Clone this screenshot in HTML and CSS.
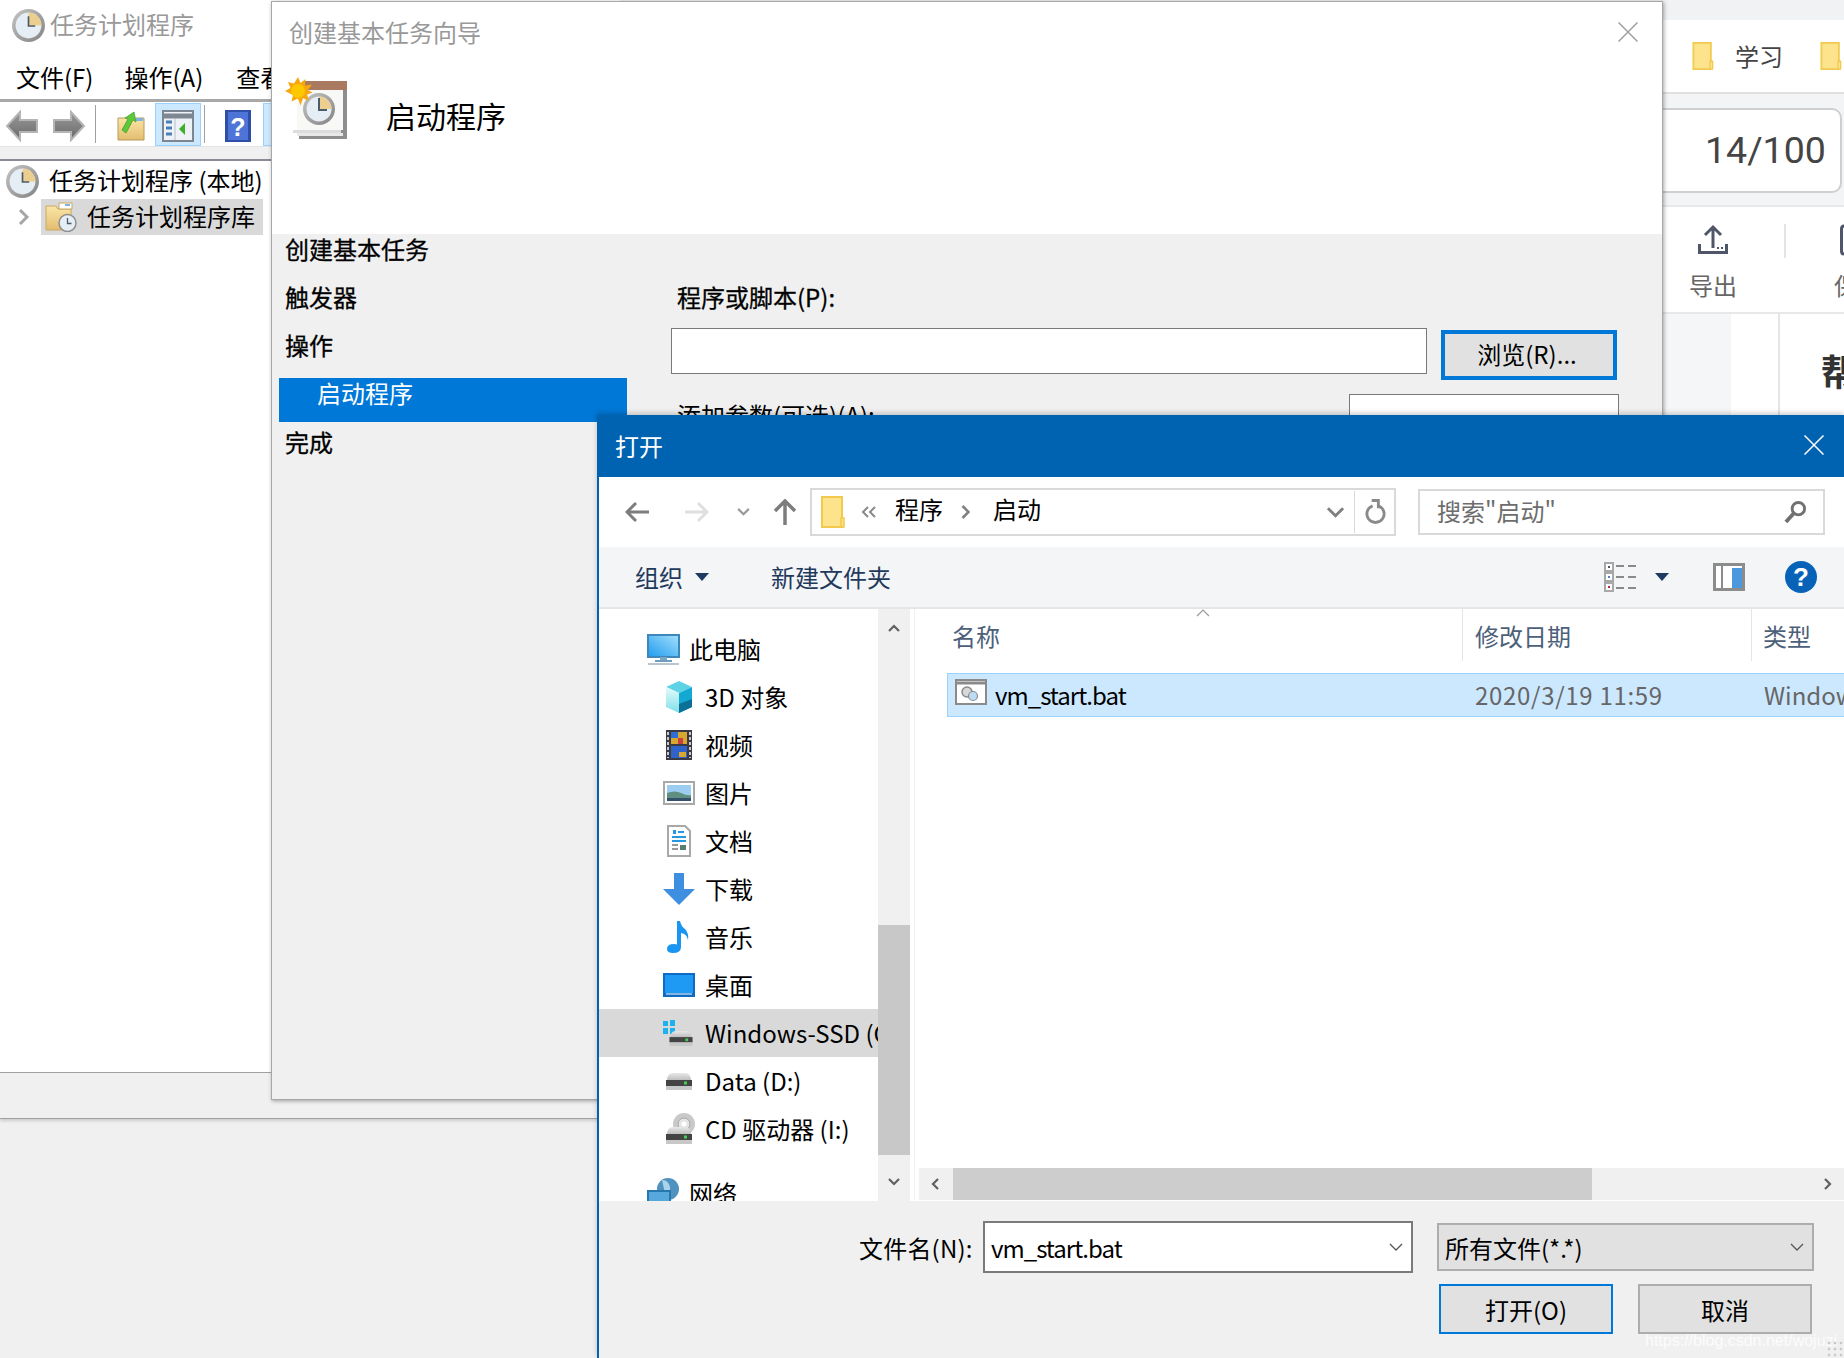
FILE: index.html
```html
<!DOCTYPE html>
<html lang="zh-CN">
<head>
<meta charset="utf-8">
<title>任务计划程序</title>
<link rel="stylesheet" href="styles.css">
</head>
<body>
<svg class="defs" aria-hidden="true">
  <defs>
    <linearGradient id="gArrow" x1="0" y1="0" x2="0" y2="1"><stop offset="0" stop-color="#9a9a9a"/><stop offset="1" stop-color="#6a6a6a"/></linearGradient>
    <linearGradient id="gFolder" x1="0" y1="0" x2="0" y2="1"><stop offset="0" stop-color="#fbe6a6"/><stop offset="1" stop-color="#e3bd70"/></linearGradient>
    <linearGradient id="gDisk" x1="0" y1="0" x2="0" y2="1"><stop offset="0" stop-color="#e8e8e8"/><stop offset="1" stop-color="#b8b8b8"/></linearGradient>
    <linearGradient id="gScreen" x1="0" y1="1" x2="1" y2="0"><stop offset="0" stop-color="#1f9bf0"/><stop offset="1" stop-color="#a5e1fb"/></linearGradient>
    <linearGradient id="gRing" x1="0" y1="0" x2="1" y2="1"><stop offset="0" stop-color="#c4c4c4"/><stop offset="1" stop-color="#838383"/></linearGradient>
    <linearGradient id="gCube" x1="0" y1="0" x2="0" y2="1"><stop offset="0" stop-color="#e4fafb"/><stop offset="1" stop-color="#7fe0ea"/></linearGradient>
  </defs>
  <symbol id="clock" viewBox="0 0 32 32">
    <circle cx="16" cy="16" r="16" fill="url(#gRing)"/>
    <circle cx="16" cy="16" r="12.500" fill="#e6eef5"/>
    <path d="M16 3.500A12.500 12.500 0 0 1 28.500 16H16z" fill="#eccf8e"/>
    <path d="M16 7v9.500h6.500" fill="none" stroke="#4d5a68" stroke-width="1.600"/>
  </symbol>
  <symbol id="arrowL" viewBox="0 0 34 32">
    <path d="M15 2 2 16l13 14V22h17V10H15z" fill="url(#gArrow)" stroke="#b5b5b5" stroke-width="2"/>
  </symbol>
  <symbol id="arrowR" viewBox="0 0 34 32">
    <path d="M19 2 32 16 19 30V22H2V10h17z" fill="url(#gArrow)" stroke="#b5b5b5" stroke-width="2"/>
  </symbol>
  <symbol id="folderY" viewBox="0 0 24 32">
    <path d="M1 1h20v30H1z" fill="#fde38c" stroke="#f2c94c" stroke-width="2"/>
    <path d="M20 22h3v9h-3z" fill="#fde38c" stroke="#f2c94c" stroke-width="1.500"/>
  </symbol>
  <symbol id="disk" viewBox="0 0 28 18">
    <path d="M2 9q0-8 6-8h12q6 0 6 8z" fill="url(#gDisk)"/>
    <rect x="1" y="8" width="26" height="6" fill="#444"/>
    <rect x="1" y="14" width="26" height="4" fill="#c8c8c8"/>
    <rect x="19" y="9.500" width="3" height="3" fill="#45d052"/>
  </symbol>
</svg>

<section class="browser">
  <div class="b-strip"></div>
  <div class="b-tabs">
    <svg class="ic-folder-b"><use href="#folderY"/></svg>
    <span class="b-tab">学习</span>
    <svg class="ic-folder-b b-folder2"><use href="#folderY"/></svg>
  </div>
  <div class="b-counter-wrap"><div class="b-counter">14/100</div></div>
  <div class="b-actions">
    <div class="b-action">
      <svg class="ic-export" viewBox="0 0 30 32"><path d="M15 24V4M7 11l8-8 8 8" fill="none" stroke="#50566a" stroke-width="3"/><path d="M1.500 20v8.500h27V20" fill="none" stroke="#50566a" stroke-width="3"/><path d="M19 23h2v2h-2zM23 23h2v2h-2z" fill="#50566a"/></svg>
      <span>导出</span>
    </div>
    <div class="b-sep"></div>
    <div class="b-action b-action2">
      <svg class="ic-save" viewBox="0 0 10 32"><path d="M8 2H4Q1.500 2 1.500 5v22q0 3 2.500 3h4" fill="none" stroke="#50566a" stroke-width="3"/></svg>
      <span>保存</span>
    </div>
  </div>
  <div class="b-lower">
    <div class="b-gutter"></div>
    <div class="b-blank"></div>
    <div class="b-doc">帮助</div>
  </div>
</section>

<section class="sched">
  <header class="sched-title">
    <svg class="ic-sched-clock"><use href="#clock"/></svg>
    <span>任务计划程序</span>
  </header>
  <nav class="sched-menu"><span>文件(F)</span><span>操作(A)</span><span>查看(V)</span></nav>
  <div class="sched-tools">
    <svg class="t-back"><use href="#arrowL"/></svg>
    <svg class="t-fwd"><use href="#arrowR"/></svg>
    <i class="t-sep t-sep1"></i>
    <svg class="t-up" viewBox="0 0 28 30"><path d="M1 7h26v22H1z" fill="url(#gFolder)" stroke="#b89a5a"/><path d="M19 7h7v3h-7z" fill="#7fb2e0"/><path d="M5 19 11 8 8 7l9-6 2 10-3-2-7 13z" fill="#5cc83a" stroke="#3f9a25" stroke-width=".7"/></svg>
    <span class="t-btn"><svg viewBox="0 0 32 32"><rect x="1" y="1" width="30" height="30" fill="#eef2f6" stroke="#7d8791" stroke-width="2"/><path d="M1 6h30" stroke="#7d8791" stroke-width="5"/><path d="M13 9v21" stroke="#b8bec4"/><path d="M4 12h6M4 18h6M4 24h6" stroke="#4a7fb5" stroke-width="3"/><path d="M23 13v12l-6-6z" fill="#3fae2a"/></svg></span>
    <i class="t-sep t-sep2"></i>
    <svg class="t-help" viewBox="0 0 26 32"><rect width="26" height="32" fill="#2f4ea8"/><rect x="3" y="2" width="20" height="28" fill="#4d74d6"/><text x="13" y="26" class="t-help-q">?</text></svg>
    <span class="t-btn t-btn2"></span>
  </div>
  <div class="sched-strip"></div>
  <div class="sched-tree">
    <div class="tree1">
      <svg class="ic-tree-clock"><use href="#clock"/></svg>
      <span>任务计划程序 (本地)</span>
    </div>
    <div class="tree2">
      <svg class="tree-chev" viewBox="0 0 12 16"><path d="M2 1l7 7-7 7" fill="none" stroke="#a6a6a6" stroke-width="3"/></svg>
      <div class="tree2-sel">
        <svg class="ic-tree-folder" viewBox="0 0 32 30"><path d="M1 4h10l2 3h13v21H1z" fill="url(#gFolder)" stroke="#c9a860"/><path d="M14 1h13v6H14z" fill="#fff" stroke="#c9a860"/><path d="M20 2h5v2h-5z" fill="#7fb2e0"/><circle cx="22.500" cy="21" r="8.500" fill="#e6eef5" stroke="#8d8d8d" stroke-width="1.500"/><path d="M22.500 16v5.500h4" fill="none" stroke="#4d5a68" stroke-width="1.300"/></svg>
        <span>任务计划程序库</span>
      </div>
    </div>
  </div>
  <div class="sched-status"></div>
</section>

<section class="wizard">
  <div class="wiz-top">
    <header class="wiz-title">
      <span>创建基本任务向导</span>
      <svg class="wiz-close" viewBox="0 0 20 20"><path d="M.5.500l19 19M19.500.500l-19 19" stroke="#a0a0a0" stroke-width="1.500"/></svg>
    </header>
    <div class="wiz-heading">
      <svg class="ic-wiz" viewBox="0 0 62 62">
        <rect x="14" y="8" width="48" height="54" fill="#8e8e8e"/>
        <rect x="12" y="56" width="46" height="3" fill="#e8e8e8"/>
        <path d="M8 53h48v3H8z" fill="#dcdcdc"/>
        <rect x="12" y="13" width="46" height="40" fill="#f8f8f6"/>
        <rect x="20" y="4" width="42" height="9" fill="#a97a60"/>
        <circle cx="34" cy="32" r="16" fill="url(#gRing)"/><circle cx="34" cy="32" r="12.500" fill="#e6eef5"/>
        <path d="M34 19.500A12.500 12.500 0 0 1 46.500 32H34z" fill="#eccf8e"/>
        <path d="M34 21v12h8" fill="none" stroke="#4d5a68" stroke-width="2"/>
        <path d="M13 0l2.500 6 5-4-.5 6.500 7-1-4 5.500 4.500 2.500-5.500 2 2 6.500-6-3-2.500 7.500-2.500-7-6.500 3 1.500-6.500L0 14l5.500-3L3 5l6 1.500z" fill="#f7a70c"/>
        <circle cx="13" cy="14" r="7" fill="#fdc800"/>
      </svg>
      <span class="wiz-h1">启动程序</span>
    </div>
  </div>
  <div class="wiz-body">
    <ul class="steps">
      <li>创建基本任务</li>
      <li>触发器</li>
      <li>操作</li>
      <li class="step-on">启动程序</li>
      <li>完成</li>
    </ul>
    <div class="wiz-main">
      <div class="f-label">程序或脚本(P):</div>
      <div class="f-row">
        <div class="f-input"></div>
        <div class="f-browse">浏览(R)...</div>
      </div>
      <div class="f-row2">
        <div class="f-label2">添加参数(可选)(A):</div>
        <div class="f-input2"></div>
      </div>
    </div>
  </div>
</section>

<section class="dialog">
  <header class="d-title">
    <span>打开</span>
    <svg class="d-close" viewBox="0 0 20 20"><path d="M.5.500l19 19M19.500.500l-19 19" stroke="#fff" stroke-width="1.500"/></svg>
  </header>
  <div class="d-nav">
    <svg class="n-back" viewBox="0 0 24 22"><path d="M11 2 2 11l9 9M2 11h22" fill="none" stroke="#7d7d7d" stroke-width="3"/></svg>
    <svg class="n-fwd" viewBox="0 0 24 22"><path d="M13 2l9 9-9 9M22 11H0" fill="none" stroke="#dfdfdf" stroke-width="3"/></svg>
    <svg class="n-drop" viewBox="0 0 14 9"><path d="M1 1l6 6 6-6" fill="none" stroke="#9a9a9a" stroke-width="2.500"/></svg>
    <svg class="n-up" viewBox="0 0 24 26"><path d="M2 12l10-10 10 10M12 2v24" fill="none" stroke="#7d7d7d" stroke-width="3.500"/></svg>
    <div class="addr">
      <svg class="addr-folder"><use href="#folderY"/></svg>
      <svg class="addr-more" viewBox="0 0 16 12"><path d="M7 1 2 6l5 5M14 1 9 6l5 5" fill="none" stroke="#8a8a8a" stroke-width="2"/></svg>
      <span class="addr-a">程序</span>
      <svg class="addr-sep" viewBox="0 0 9 14"><path d="M1.500 1l6 6-6 6" fill="none" stroke="#808080" stroke-width="2.500"/></svg>
      <span class="addr-b">启动</span>
      <svg class="addr-chev" viewBox="0 0 20 12"><path d="M2 2l8 8 8-8" fill="none" stroke="#808080" stroke-width="3"/></svg>
      <i class="addr-div"></i>
      <svg class="addr-ref" viewBox="0 0 22 26"><path d="M8 6.500a9 9 0 1 0 6 0" fill="none" stroke="#8a8a8a" stroke-width="3"/><path d="M7 1h7v8" fill="none" stroke="#8a8a8a" stroke-width="3"/></svg>
    </div>
    <div class="search">
      <span>搜索"启动"</span>
      <svg class="search-ic" viewBox="0 0 24 26"><circle cx="15" cy="9" r="6.500" fill="none" stroke="#707070" stroke-width="3"/><path d="M10 14 2 23" stroke="#707070" stroke-width="4"/></svg>
    </div>
  </div>
  <div class="d-tools">
    <span class="dt-org">组织</span>
    <svg class="dt-tri" viewBox="0 0 14 8"><path d="M0 0h14L7 8z" fill="#1f3a60"/></svg>
    <span class="dt-new">新建文件夹</span>
    <svg class="dt-view" viewBox="0 0 32 30"><path d="M1 1h8v8H1zM1 11h8v8H1zM1 21h8v8H1z" fill="#fff" stroke="#a8a8a8" stroke-width="2"/><path d="M4 4h2v2H4z" fill="#555"/><path d="M4 14h2v2H4z" fill="#4a7fd6"/><path d="M4 24h2v2H4z" fill="#c02a2a"/><path d="M12 4h8M24 4h8M12 15h8M24 15h8M12 26h8M24 26h8" stroke="#8a8a8a" stroke-width="2"/></svg>
    <svg class="dt-tri dt-tri2" viewBox="0 0 14 8"><path d="M0 0h14L7 8z" fill="#1f3a60"/></svg>
    <svg class="dt-pane" viewBox="0 0 32 28"><rect x="1.500" y="1.500" width="29" height="25" fill="#fff" stroke="#8c8c8c" stroke-width="3"/><path d="M9 2v25" stroke="#8c8c8c" stroke-width="2"/><rect x="19" y="5" width="10" height="20" fill="#4c98df"/></svg>
    <svg class="dt-help" viewBox="0 0 32 32"><circle cx="16" cy="16" r="16" fill="#0863b8"/><text x="16" y="25" class="dt-help-q">?</text></svg>
  </div>
  <div class="d-main">
    <div class="tree">
      <div class="row row1"><svg class="ic" viewBox="0 0 33 32"><rect x="1" y="2" width="31" height="22" fill="url(#gScreen)" stroke="#3f87ba" stroke-width="2"/><path d="M13 24h7v3h-7z" fill="#7aa6c6"/><path d="M8 27h17v2H8z" fill="#6e9dbf"/><path d="M1 30h31v2H1z" fill="#b9c6d0"/></svg><span>此电脑</span></div>
      <div class="row"><svg class="ic" viewBox="0 0 32 32"><path d="M16 0 29 6 16 12 3 6z" fill="#5fd3e6"/><path d="M3 6l13 6v20L3 26z" fill="url(#gCube)"/><path d="M29 6 16 12v20l13-6z" fill="#12a9d3"/><path d="M16 23l13-5v8l-13 6z" fill="#0c6f96"/></svg><span>3D 对象</span></div>
      <div class="row"><svg class="ic" viewBox="0 0 32 32"><rect x="3" y="1" width="26" height="30" fill="#3a3a44"/><path d="M5 3v26M27 3v26" stroke="#c9c9c9" stroke-width="2" stroke-dasharray="3 2"/><rect x="8" y="3" width="16" height="12" fill="#d8a72d"/><rect x="8" y="3" width="7" height="6" fill="#2d6fd6"/><rect x="15" y="9" width="5" height="6" fill="#c9413f"/><rect x="8" y="17" width="16" height="12" fill="#2f63c9"/><rect x="16" y="23" width="7" height="5" fill="#d8a72d"/></svg><span>视频</span></div>
      <div class="row"><svg class="ic" viewBox="0 0 32 24"><rect x="1" y="1" width="30" height="22" fill="#fff" stroke="#a8a8a8" stroke-width="2"/><rect x="4" y="4" width="24" height="16" fill="#9ccdf0"/><path d="M4 12q8-3 14 0t10 2v6H4z" fill="#5f8f80"/><path d="M4 17h24v3H4z" fill="#34506a"/></svg><span>图片</span></div>
      <div class="row"><svg class="ic" viewBox="0 0 32 32"><path d="M5 1h17l5 5v25H5z" fill="#fff" stroke="#a8a8a8" stroke-width="2"/><path d="M10 5h3v4h-3z" fill="#2a98e0"/><path d="M15 7h6M9 12h14M9 16h14" stroke="#2a98e0" stroke-width="2"/><path d="M9 20h6M9 24h6" stroke="#9a9a9a" stroke-width="2"/><path d="M17 20h6v5h-6z" fill="#5a7f6f"/></svg><span>文档</span></div>
      <div class="row"><svg class="ic" viewBox="0 0 32 32"><path d="M11 0h10v16h11L16 32 0 16h11z" fill="#3f8fe0"/></svg><span>下载</span></div>
      <div class="row"><svg class="ic" viewBox="0 0 32 32"><path d="M14 0h3q1 5 5 8 4 4 3 11-1-6-7-7v14q0 6-8 6-6 0-6-4 0-5 7-5 2 0 3 .5z" fill="#1a96f2"/></svg><span>音乐</span></div>
      <div class="row"><svg class="ic" viewBox="0 0 32 24"><rect width="32" height="24" fill="#0e6bc4"/><rect x="2" y="2" width="28" height="18" fill="#1e9af5"/><path d="M3 21h26" stroke="#fff" stroke-width="1"/></svg><span>桌面</span></div>
      <div class="row row-sel"><svg class="ic" viewBox="0 0 32 26"><path d="M0 1h5v5H0zM7 0h5v6H7zM0 8h5v6H0zM7 8h5v6H7z" fill="#1cb2ee"/><use href="#disk" x="4" y="10" width="28" height="16"/></svg><span>Windows-SSD (C:)</span></div>
      <div class="row"><svg class="ic" viewBox="0 0 32 20"><use href="#disk" x="2" y="1" width="28" height="18"/></svg><span>Data (D:)</span></div>
      <div class="row"><svg class="ic" viewBox="0 0 32 32"><circle cx="21" cy="11" r="11" fill="#c9c9c9"/><circle cx="21" cy="11" r="6" fill="#e4e4e4" stroke="#a8a8a8"/><circle cx="21" cy="11" r="2.500" fill="#fff"/><use href="#disk" x="2" y="13" width="28" height="18"/></svg><span>CD 驱动器 (I:)</span></div>
      <div class="row row1 row-net"><svg class="ic" viewBox="0 0 33 32"><circle cx="21" cy="12" r="11" fill="#4f92bf"/><path d="M15 3q7 0 8 8t-4 10" fill="#a9d4ec"/><rect x="1" y="14" width="22" height="17" fill="#57a8dc" stroke="#2878b0" stroke-width="2"/></svg><span>网络</span></div>
    </div>
    <div class="vscroll">
      <svg class="vs-arrow" viewBox="0 0 12 8"><path d="M1 7l5-5 5 5" fill="none" stroke="#606060" stroke-width="2.200"/></svg>
      <div class="vs-track"><div class="vs-thumb"></div></div>
      <svg class="vs-arrow" viewBox="0 0 12 8"><path d="M1 1l5 5 5-5" fill="none" stroke="#606060" stroke-width="2.200"/></svg>
    </div>
    <div class="list">
      <div class="l-head">
        <div class="lh lh-name">名称<svg class="sort" viewBox="0 0 14 8"><path d="M1 7l6-6 6 6" fill="none" stroke="#9a9a9a" stroke-width="1.200"/></svg></div>
        <div class="lh lh-date">修改日期</div>
        <div class="lh lh-type">类型</div>
      </div>
      <div class="l-row">
        <div class="lc-name">
          <svg class="ic-bat" viewBox="0 0 32 26"><rect x="1" y="1" width="30" height="24" fill="#fff" stroke="#8a8a8a" stroke-width="2"/><path d="M1 4h30" stroke="#8a8a8a" stroke-width="3"/><circle cx="12" cy="13" r="5" fill="#d8d8d8" stroke="#8a8a8a" stroke-width="1.500"/><circle cx="18" cy="17" r="4.500" fill="#bcdcf5" stroke="#8a8a8a" stroke-width="1.200"/></svg>
          <span class="fname">vm_start.bat</span>
        </div>
        <div class="lc-date">2020/3/19 11:59</div>
        <div class="lc-type">Windows 批处理文件</div>
      </div>
      <div class="l-fill"></div>
      <div class="hscroll">
        <svg class="hs-arrow" viewBox="0 0 8 12"><path d="M7 1 2 6l5 5" fill="none" stroke="#606060" stroke-width="2.200"/></svg>
        <div class="hs-track"><div class="hs-thumb"></div></div>
        <svg class="hs-arrow" viewBox="0 0 8 12"><path d="M1 1l5 5-5 5" fill="none" stroke="#606060" stroke-width="2.200"/></svg>
      </div>
    </div>
  </div>
  <footer class="d-foot">
    <div class="foot-row">
      <span class="foot-label">文件名(N):</span>
      <div class="foot-input"><span class="fname">vm_start.bat</span><svg class="foot-chev" viewBox="0 0 14 8"><path d="M1 1l6 6 6-6" fill="none" stroke="#555" stroke-width="1.300"/></svg></div>
      <div class="foot-combo"><span>所有文件(*.*)</span><svg class="foot-chev" viewBox="0 0 14 8"><path d="M1 1l6 6 6-6" fill="none" stroke="#555" stroke-width="1.300"/></svg></div>
    </div>
    <div class="foot-btns">
      <div class="btn btn-def">打开(O)</div>
      <div class="btn">取消</div>
    </div>
  </footer>
</section>

<div class="mark">https://blog.csdn.net/wojuzi</div>
<div class="grip"></div>
</body>
</html>
```

FILE: styles.css
```css
* { box-sizing: border-box; }
html, body { margin: 0; padding: 0; }
body {
  position: relative;
  width: 1844px;
  height: 1358px;
  overflow: hidden;
  background: #f0f0f0;
  font-family: "Noto Sans CJK SC", "Noto Sans", sans-serif;
  font-size: 24px;
  color: #000;
}
svg { display: block; flex: none; }
.defs { position: absolute; width: 0; height: 0; }

/* background browser */
.browser { position: absolute; left: 1662px; top: 0; width: 182px; height: 420px; background: #fff; overflow: hidden; }
.b-strip { height: 20px; background: #f1f2f4; }
.b-tabs { height: 74px; display: flex; align-items: center; padding: 0 0 0 29px; border-bottom: 2px solid #e0e0e0; }
.ic-folder-b { width: 24px; height: 28px; }
.b-tab { width: 46px; flex: none; margin: 0 0 2px 20px; color: #444; white-space: nowrap; }
.b-folder2 { margin-left: 38px; }
.b-counter-wrap { height: 113px; padding: 14px 0; background: #f3f4f5; border-bottom: 2px solid #e8e8e8; }
.b-counter {
  width: 180px; height: 85px;
  background: #fff; border: 2px solid #cfcfcf; border-left: 0; border-radius: 0 10px 10px 0;
  padding-left: 43px; line-height: 80px;
  font-family: Roboto, sans-serif; font-size: 37.5px; color: #444;
}
.b-actions { height: 107px; display: flex; border-bottom: 2px solid #e8e8e8; }
.b-action { width: 122px; padding-left: 27px; color: #666; line-height: 30px; white-space: nowrap; flex: none; }
.ic-export { width: 30px; height: 32px; margin: 17px 0 14px 9px; }
.b-sep { width: 2px; height: 34px; margin-top: 17px; background: #e4e4e4; flex: none; }
.b-action2 { padding-left: 48px; }
.ic-save { width: 10px; height: 32px; margin: 17px 0 14px 6px; }
.b-lower { display: flex; height: 108px; }
.b-gutter { width: 69px; background: #f5f6f7; flex: none; }
.b-blank { width: 49px; border-right: 2px solid #e6e6e6; flex: none; }
.b-doc { padding: 32px 0 0 41px; font-size: 36px; font-weight: 700; color: #333; line-height: 48px; white-space: nowrap; }

/* task scheduler */
.sched { position: absolute; left: 0; top: 0; width: 620px; height: 1119px; background: #fff; display: flex; flex-direction: column; border-bottom: 1px solid #a0a0a0; overflow: hidden; box-shadow: 0 2px 3px rgba(0,0,0,.15); }
.sched-title { height: 50px; flex: none; display: flex; align-items: center; padding-left: 12px; color: #999; }
.sched-title span { margin-bottom: 4px; }
.ic-sched-clock { width: 33px; height: 33px; margin-right: 5px; }
.sched-menu { height: 52px; flex: none; display: flex; padding: 9px 0 0 16px; line-height: 36px; border-bottom: 3px solid #a8a8a8; white-space: nowrap; }
.sched-menu span { margin-right: 31px; }
.sched-menu span:nth-child(2) { margin-right: 33px; }
.sched-tools { height: 45px; flex: none; display: flex; align-items: center; padding: 4px 0 0 5px; border-bottom: 1px solid #e3e3e3; }
.t-back { width: 34px; height: 32px; }
.t-fwd { width: 34px; height: 32px; margin-left: 13px; }
.t-sep { width: 1px; height: 38px; margin-top: -4px; background: #a0a0a0; flex: none; }
.t-sep1 { margin-left: 9px; }
.t-up { width: 28px; height: 30px; margin-left: 21px; }
.t-btn { width: 46px; height: 43px; margin: -4px 0 0 10px; flex: none; background: #cce8ff; border: 1px solid #99d1ff; display: flex; align-items: center; justify-content: center; }
.t-btn svg { width: 32px; height: 32px; margin-top: 4px; }
.t-sep2 { margin-left: 3px; }
.t-help { width: 26px; height: 32px; margin: -1px 0 0 20px; }
.t-help-q { font-size: 25px; font-weight: 700; fill: #fff; text-anchor: middle; font-family: "Liberation Sans", sans-serif; }
.t-btn2 { margin-left: 12px; }
.sched-strip { height: 14px; flex: none; background: #f0f0f0; border-bottom: 2px solid #8b8b95; }
.sched-tree { flex: 1; padding-top: 2px; white-space: nowrap; border-bottom: 1px solid #a0a0a0; }
.tree1 { height: 36px; display: flex; align-items: center; padding-left: 6px; }
.tree1 span { margin-bottom: 3px; }
.ic-tree-clock { width: 33px; height: 33px; margin-right: 10px; }
.tree2 { display: flex; align-items: center; height: 36px; padding-left: 18px; }
.tree-chev { width: 12px; height: 16px; }
.tree2-sel { width: 222px; height: 36px; margin-left: 11px; background: #d9d9d9; display: flex; align-items: center; padding-left: 4px; }
.tree2-sel span { margin-bottom: 3px; }
.ic-tree-folder { width: 32px; height: 30px; margin-right: 10px; }
.sched-status { height: 45px; flex: none; background: #f0f0f0; }

/* wizard */
.wizard { position: absolute; left: 271px; top: 1px; width: 1392px; height: 1099px; display: flex; flex-direction: column; background: #f0f0f0; border: 1px solid #a8a8a8; box-shadow: 1px 1px 4px rgba(0,0,0,.35); overflow: hidden; }
.wiz-top { height: 232px; flex: none; background: #fff; }
.wiz-title { height: 63px; display: flex; align-items: center; justify-content: space-between; padding: 0 24px 0 17px; color: #999; }
.wiz-title span { margin-bottom: 4px; }
.wiz-close { width: 20px; height: 20px; margin-top: -3px; }
.wiz-heading { display: flex; padding: 12px 0 0 13px; }
.ic-wiz { width: 62px; height: 62px; }
.wiz-h1 { margin: 16px 0 0 39px; font-size: 30px; line-height: 44px; }
.wiz-body { flex: 1; display: flex; }
.steps { list-style: none; margin: 0; padding: 0 0 0 7px; width: 355px; flex: none; }
.steps li { height: 34px; margin-bottom: 14px; line-height: 30px; padding-left: 6px; -webkit-text-stroke: .3px #000; }
.steps .step-on { height: 44px; margin-bottom: 5px; padding-left: 38px; background: #0078d7; color: #fff; -webkit-text-stroke: 0; }
.wiz-main { flex: 1; padding: 48px 0 0 44px; }
.f-label { height: 34px; padding-left: 6px; line-height: 30px; -webkit-text-stroke: .3px #000; }
.f-row { display: flex; margin-top: 12px; align-items: flex-start; }
.f-input { width: 756px; height: 46px; background: #fff; border: 1px solid #7a7a7a; }
.f-browse { width: 176px; height: 50px; margin: 2px 0 0 14px; padding: 0 4px 4px 0; background: #e1e1e1; border: 4px solid #0078d7; display: flex; align-items: center; justify-content: center; }
.f-row2 { display: flex; align-items: flex-start; margin-top: 14px; }
.f-label2 { width: 678px; padding: 4px 0 0 6px; line-height: 34px; }
.f-input2 { width: 270px; height: 46px; background: #fff; border: 1px solid #7a7a7a; }

/* open dialog */
.dialog { position: absolute; left: 597px; top: 415px; width: 1247px; height: 943px; display: flex; flex-direction: column; background: #fff; border-left: 2px solid #0063b1; box-shadow: 0 -2px 5px rgba(0,0,0,.2); overflow: hidden; }
.d-title { height: 62px; flex: none; display: flex; align-items: center; justify-content: space-between; padding: 0 20px 0 16px; background: #0063b1; color: #fff; }
.d-title span { margin-bottom: 2px; }
.d-close { width: 20px; height: 20px; margin-top: -2px; }
.d-nav { height: 70px; flex: none; display: flex; align-items: center; padding-left: 26px; white-space: nowrap; }
.n-back, .n-fwd { width: 24px; height: 22px; }
.n-fwd { margin-left: 36px; }
.n-drop { width: 13px; height: 8px; margin-left: 28px; }
.n-up { width: 24px; height: 26px; margin-left: 23px; }
.addr { width: 586px; height: 48px; margin-left: 13px; display: flex; align-items: center; border: 2px solid #d9d9d9; padding-left: 9px; flex: none; }
.addr span { margin-bottom: 8px; width: 48px; flex: none; }
.addr-folder { width: 24px; height: 32px; }
.addr-more { width: 16px; height: 12px; margin-left: 16px; }
.addr-a { margin-left: 18px; }
.addr-sep { width: 9px; height: 14px; margin-left: 18px; }
.addr-b { margin-left: 23px; }
.addr-chev { width: 19px; height: 12px; margin-left: 285px; }
.addr-div { width: 1px; height: 42px; background: #d9d9d9; margin-left: 9px; flex: none; }
.addr-ref { width: 21px; height: 26px; margin-left: 10px; }
.search { width: 407px; height: 46px; margin-left: 22px; display: flex; align-items: center; justify-content: space-between; border: 2px solid #d9d9d9; padding: 0 16px 0 17px; color: #6d6d6d; flex: none; }
.search span { margin-bottom: 3px; }
.search-ic { width: 23px; height: 25px; }
.d-tools { height: 62px; flex: none; display: flex; align-items: center; padding-left: 36px; background: #f4f5f7; border-bottom: 2px solid #e5e5e5; color: #1f3a5c; }
.d-tools span { margin-bottom: 2px; }
.dt-org { width: 60px; }
.dt-tri { width: 14px; height: 8px; }
.dt-new { width: 120px; margin-left: 62px; }
.dt-view { width: 32px; height: 30px; margin-left: 713px; }
.dt-tri2 { margin-left: 19px; }
.dt-pane { width: 32px; height: 28px; margin-left: 44px; }
.dt-help { width: 32px; height: 32px; margin-left: 40px; }
.dt-help-q { font-size: 26px; font-weight: 700; fill: #fff; text-anchor: middle; font-family: "Liberation Sans", sans-serif; }
.d-main { height: 592px; flex: none; display: flex; }
.tree { width: 279px; flex: none; padding-top: 16px; overflow: hidden; white-space: nowrap; }
.row { height: 48px; display: flex; align-items: center; padding-left: 64px; overflow: hidden; }
.row span { margin-bottom: 2px; }
.row .ic { width: 32px; height: 32px; margin-right: 10px; }
.row1 { padding-left: 48px; }
.row1 .ic { width: 33px; margin-right: 9px; }
.row-net { margin-top: 16px; }
.row-sel { background: #d9d9d9; }
.vscroll { width: 32px; flex: none; background: #f0f0f0; display: flex; flex-direction: column; align-items: center; }
.vs-arrow { width: 12px; height: 8px; margin: 15px 0; }
.vs-track { flex: 1; width: 32px; padding-top: 278px; }
.vs-thumb { height: 230px; background: #c8c8c8; }
.list { flex: 1; min-width: 0; margin-left: 4px; border-left: 1px solid #f0f0f0; display: flex; flex-direction: column; overflow: hidden; }
.l-head { height: 52px; flex: none; display: flex; color: #4c607a; line-height: 53px; }
.lh { height: 52px; flex: none; position: relative; }
.lh-name { width: 548px; padding-left: 37px; border-right: 1px solid #e5e5e5; }
.sort { position: absolute; left: 281px; top: 0; width: 14px; height: 8px; }
.lh-date { width: 289px; padding-left: 12px; border-right: 1px solid #e5e5e5; }
.lh-type { padding-left: 11px; }
.l-row { height: 44px; flex: none; margin: 12px 0 0 32px; display: flex; align-items: center; background: #cce8ff; border: 1px solid #99d1ff; border-right: 0; white-space: nowrap; }
.lc-name { width: 516px; flex: none; display: flex; align-items: center; padding-left: 7px; }
.lc-name span { margin-bottom: 2px; }
.fname { letter-spacing: -1px; }
.ic-bat { width: 32px; height: 26px; margin: -6px 8px 0 0; }
.lc-date { width: 289px; flex: none; padding: 0 0 2px 11px; color: #666; letter-spacing: .7px; }
.lc-type { padding: 0 0 2px 11px; color: #666; }
.l-fill { flex: 1; }
.hscroll { height: 32px; flex: none; margin: 0 0 1px 4px; background: #f0f0f0; display: flex; align-items: center; }
.hs-arrow { width: 8px; height: 12px; margin: 0 12px; }
.hs-track { flex: 1; height: 32px; }
.hs-thumb { width: 639px; height: 32px; margin-left: 2px; background: #cdcdcd; }
.d-foot { flex: 1; background: #f0f0f0; padding: 20px 0 0 260px; }
.foot-row { display: flex; align-items: center; height: 52px; }
.foot-label { width: 124px; flex: none; white-space: nowrap; letter-spacing: .2px; }
.foot-input { width: 430px; height: 52px; display: flex; align-items: center; justify-content: space-between; background: #fff; border: 2px solid #7a7a7a; padding: 0 8px 0 6px; }
.foot-combo { width: 377px; height: 48px; margin-left: 24px; display: flex; align-items: center; justify-content: space-between; background: #e1e1e1; border: 2px solid #adadad; padding: 0 8px 0 6px; }
.foot-chev { width: 14px; height: 8px; }
.foot-btns { display: flex; margin: 11px 0 0 580px; }
.btn { width: 174px; height: 50px; margin-right: 25px; display: flex; align-items: center; justify-content: center; background: #e1e1e1; border: 2px solid #adadad; flex: none; }
.btn-def { border-color: #0078d7; }

/* overlay */
.mark { position: absolute; left: 1645px; top: 1331px; font-family: "Liberation Sans", sans-serif; font-size: 16px; line-height: 20px; color: rgba(255,255,255,.85); white-space: nowrap; }
.grip { position: absolute; left: 1826px; top: 1340px; width: 18px; height: 18px; background-image: radial-gradient(#c8c8c8 1.500px, transparent 1.600px); background-size: 6px 6px; }
```
